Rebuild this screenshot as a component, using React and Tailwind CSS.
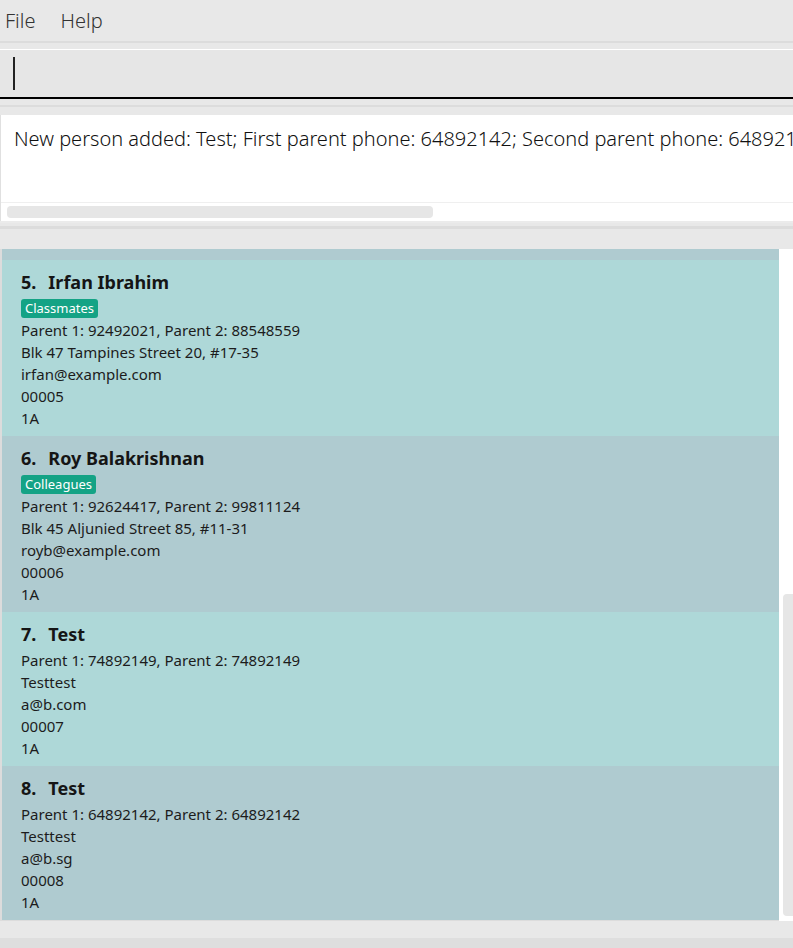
// Address book window: menu, command box, result display, person list

const PEOPLE = [
  {
    idx: 5,
    name: 'Irfan Ibrahim',
    tag: 'Classmates',
    phones: 'Parent 1: 92492021, Parent 2: 88548559',
    address: 'Blk 47 Tampines Street 20, #17-35',
    email: 'irfan@example.com',
    id: '00005',
    cls: '1A',
  },
  {
    idx: 6,
    name: 'Roy Balakrishnan',
    tag: 'Colleagues',
    phones: 'Parent 1: 92624417, Parent 2: 99811124',
    address: 'Blk 45 Aljunied Street 85, #11-31',
    email: 'royb@example.com',
    id: '00006',
    cls: '1A',
  },
  {
    idx: 7,
    name: 'Test',
    phones: 'Parent 1: 74892149, Parent 2: 74892149',
    address: 'Testtest',
    email: 'a@b.com',
    id: '00007',
    cls: '1A',
  },
  {
    idx: 8,
    name: 'Test',
    phones: 'Parent 1: 64892142, Parent 2: 64892142',
    address: 'Testtest',
    email: 'a@b.sg',
    id: '00008',
    cls: '1A',
  },
];

const FONT = { fontFamily: '"Segoe UI", "Noto Sans", "Open Sans", sans-serif' };

function PersonCard({ p }) {
  const bg = p.idx % 2 === 1 ? 'bg-[#aed8d8]' : 'bg-[#afcbd0]';
  return (
    <div className={`${bg} pl-[19px] pt-[9px] pb-[7px] text-[#1c1c1c]`}>
      <div className="h-[26px] leading-[26px] text-[18px] font-bold text-[#151515]">
        <span>{p.idx}.</span>
        <span className="ml-[12px]">{p.name}</span>
      </div>

      {/* Tags */}
      {p.tag ? (
        <div className="mt-[4px] mb-[1px] flex">
          <span className="h-[19px] leading-[19px] px-[4px] rounded-[3px] bg-[#14a385] text-white text-[13px]">
            {p.tag}
          </span>
        </div>
      ) : (
        <div className="h-[2px]" />
      )}

      <div className="text-[15px] leading-[22px]">
        <div>{p.phones}</div>
        <div>{p.address}</div>
        <div>{p.email}</div>
        <div>{p.id}</div>
        <div>{p.cls}</div>
      </div>
    </div>
  );
}

export default function App() {
  return (
    <div className="w-[793px] h-[948px] overflow-hidden bg-[#e8e8e8] flex flex-col" style={FONT}>
      {/* Menu bar */}
      <div className="h-[41px] flex items-center gap-[25px] pl-[5px] text-[20px] text-[#333] font-light">
        <span>File</span>
        <span>Help</span>
      </div>
      <div className="h-[2px] bg-[#dcdcdc]" />
      <div className="h-[6px]" />

      {/* Command box */}
      <div className="h-[50px] border-t border-white bg-[#e6e6e6] border-b-2 border-b-black flex items-center pl-[13px]">
        <div className="w-[2px] h-[33px] bg-[#222]" />
      </div>
      <div className="h-[6px]" />
      <div className="h-[2px] bg-[#dcdcdc]" />
      <div className="h-[8px]" />

      {/* Result display */}
      <div className="h-[106px] bg-white border-l border-[#e0e0e0] flex flex-col">
        <div className="h-[87px] overflow-hidden whitespace-nowrap pl-[13px] pt-[10px] text-[20px] leading-[28px] text-[#111] font-light">
          New person added: Test; First parent phone: 64892142; Second parent phone: 64892142; Address: Testtest
        </div>
        <div className="h-px bg-[#efefef]" />
        <div className="flex-1 flex items-center pl-[6px]">
          <div className="w-[426px] h-[12px] rounded-[4px] bg-[#e6e6e6]" />
        </div>
      </div>
      <div className="h-[2px] bg-[#ebebeb]" />
      <div className="h-[3px]" />
      <div className="h-[3px] bg-[#dcdcdc]" />
      <div className="h-[20px]" />

      {/* Person list */}
      <div className="h-[672px] flex pl-[2px] bg-[#dcdcdc]">
        <div className="w-[777px] overflow-hidden flex flex-col">
          <div className="h-[11px] shrink-0 bg-[#afcbd0]" />
          {PEOPLE.map((p) => (
            <PersonCard key={p.idx} p={p} />
          ))}
        </div>
        <div className="flex-1 bg-white flex flex-col items-end pt-[345px]">
          <div className="w-[10px] h-[322px] rounded-l-[4px] bg-[#e6e6e6]" />
        </div>
      </div>

      <div className="h-[17px] bg-[#e8e8e8]" />
      <div className="flex-1 bg-[#dedede]" />
    </div>
  );
}
